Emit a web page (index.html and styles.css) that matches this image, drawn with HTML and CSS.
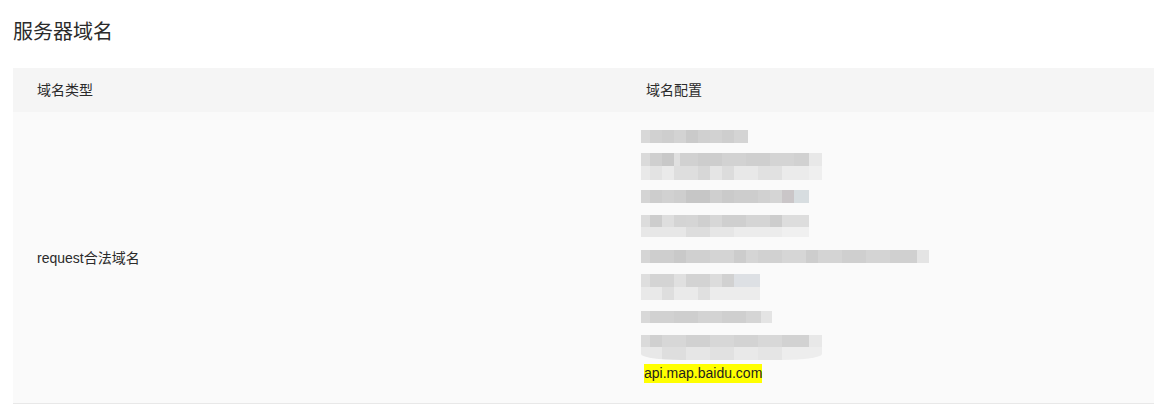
FILE: index.html
```html
<!DOCTYPE html>
<html lang="zh-CN">
<head>
<meta charset="utf-8">
<title>服务器域名</title>
<link rel="stylesheet" href="styles.css">
</head>
<body>
<h2 class="title">服务器域名</h2>
<div class="table">
  <div class="row head">
    <div class="cell">域名类型</div>
    <div class="cell">域名配置</div>
  </div>
  <div class="row body">
    <div class="cell label">request合法域名</div>
    <div class="cell list">
      <div class="mz r1"><div class="band b-r1"></div></div>
      <div class="mz r2"><div class="band b-r2a"></div><div class="band b-r2b"></div></div>
      <div class="mz r3"><div class="band b-r3"></div></div>
      <div class="mz r4"><div class="band b-r4a"></div><div class="band b-r4b"></div></div>
      <div class="mz r5"><div class="band b-r5"></div></div>
      <div class="mz r6"><div class="band b-r6a"></div><div class="band b-r6b"></div></div>
      <div class="mz r7"><div class="band b-r7"></div></div>
      <div class="mz r8"><div class="band b-r8a"></div><div class="band b-r8b"></div></div>
      <div class="domain"><span class="hl">api.map.baidu.com</span></div>
    </div>
  </div>
</div>
</body>
</html>
```
FILE: styles.css
```css
html, body {
  margin: 0;
  padding: 0;
  background: #ffffff;
}
body {
  font-family: "Liberation Sans", "Noto Sans CJK SC", sans-serif;
  color: #2b2b2b;
  font-size: 14px;
}
.title {
  margin: 0;
  padding: 18px 0 0 13px;
  height: 50px;
  line-height: 28px;
  font-size: 20px;
  font-weight: normal;
  color: #2b2b2b;
}
.table {
  margin-left: 13px;
  border-bottom: 1px solid #e8e8e8;
}
.row {
  display: grid;
  grid-template-columns: 609px 1fr;
}
.head {
  background: #f5f5f5;
  height: 44px;
}
.head .cell {
  padding-left: 24px;
  display: flex;
  align-items: center;
  line-height: 20px;
}
.body {
  background: #fafafa;
}
.label {
  padding-left: 24px;
  display: flex;
  align-items: center;
  line-height: 20px;
}
.list {
  display: flex;
  flex-direction: column;
  align-items: flex-start;
  padding: 18px 0 20px 19px;
}
.mz {
  display: flex;
  flex-direction: column;
  align-items: flex-start;
  filter: blur(0.4px) brightness(0.975);
}
.band { flex: none; }
.r2 { margin-top: 10px; }
.r3 { margin-top: 10px; }
.r4 { margin-top: 12px; }
.r5 { margin-top: 13px; }
.r6 { margin-top: 11px; }
.r7 { margin-top: 11px; }
.r8 { margin-top: 12px; }
.domain { margin-top: 4px; height: 19px; padding-left: 3px; }
.hl {
  display: inline-block;
  background: #ffff00;
  color: #1e1e1e;
  height: 19px;
  line-height: 19px;
  font-size: 14px;
}

.b-r1 {
  width: 107px; height: 13px;
  background: linear-gradient(to right,
    #dedede 0 9px, #d6d6d6 9px 21px, #d3d3d3 21px 33px, #d8d8d8 33px 45px,
    #cfcfcf 45px 57px, #d5d5d5 57px 69px, #d7d7d7 69px 81px, #d3d3d3 81px 93px, #d9d9d9 93px 107px);
}
.b-r2a {
  width: 181px; height: 13px;
  background: linear-gradient(to right,
    #e0e0e0 0 9px, #d4d4d4 9px 21px, #cdcdcd 21px 33px, #e6e6e6 33px 39px, #d6d6d6 39px 57px,
    #d2d2d2 57px 81px, #d7d7d7 81px 105px, #d4d4d4 105px 129px, #d9d9d9 129px 153px,
    #d6d6d6 153px 168px, #eeeeee 168px 181px);
}
.b-r2b {
  width: 181px; height: 14px;
  background: linear-gradient(to right,
    #efefef 0 9px, #e9e9e9 9px 21px, #f0f0f0 21px 33px, #e4e4e4 33px 57px, #dddddd 57px 69px,
    #ebebeb 69px 81px, #e2e2e2 81px 93px, #eeeeee 93px 117px, #e7e7e7 117px 141px,
    #f1f1f1 141px 168px, #f5f5f5 168px 181px);
}
.b-r3 {
  width: 168px; height: 13px;
  background: linear-gradient(to right,
    #d9d9d9 0 9px, #d2d2d2 9px 21px, #d6d6d6 21px 33px, #d3d3d3 33px 45px, #cbcbcb 45px 69px,
    #d4d4d4 69px 81px, #cfcfcf 81px 93px, #d2d2d2 93px 117px, #d6d6d6 117px 129px,
    #dadada 129px 141px, #cfcbcd 141px 153px, #dde3e6 153px 168px);
}
.b-r4a {
  width: 168px; height: 12px;
  background: linear-gradient(to right,
    #e2e2e2 0 9px, #d2d2d2 9px 21px, #e4e4e4 21px 33px, #d9d9d9 33px 45px, #dadada 45px 57px,
    #d4d4d4 57px 69px, #dddddd 69px 81px, #d4d4d4 81px 105px, #dadada 105px 129px,
    #d2d2d2 129px 141px, #e3e3e3 141px 168px);
}
.b-r4b {
  width: 168px; height: 10px;
  background: linear-gradient(to right,
    #ededed 0 45px, #e3e3e3 45px 69px, #ececec 69px 93px, #f2f2f2 93px 141px, #f6f6f6 141px 168px);
}
.b-r5 {
  width: 288px; height: 13px;
  background: linear-gradient(to right,
    #dadada 0 9px, #d3d3d3 9px 33px, #cecece 33px 45px, #d5d5d5 45px 69px, #d9d9d9 69px 93px,
    #d1d1d1 93px 105px, #dadada 105px 117px, #d6d6d6 117px 141px, #dbdbdb 141px 165px,
    #d2d2d2 165px 177px, #d9d9d9 177px 201px, #d4d4d4 201px 225px, #d9d9d9 225px 249px,
    #d5d5d5 249px 276px, #eaeaea 276px 288px);
}
.b-r6a {
  width: 119px; height: 13px;
  background: linear-gradient(to right,
    #e4e4e4 0 9px, #d9d9d9 9px 33px, #e6e6e6 33px 45px, #d8d8d8 45px 69px, #e2e2e2 69px 81px,
    #d6d6d6 81px 93px, #e3e6ea 93px 119px);
}
.b-r6b {
  width: 119px; height: 13px;
  background: linear-gradient(to right,
    #efefef 0 21px, #e4e4e4 21px 33px, #f0f0f0 33px 57px, #e6e6e6 57px 69px, #f2f2f2 69px 119px);
}
.b-r7 {
  width: 131px; height: 12px;
  background: linear-gradient(to right,
    #dedede 0 9px, #d6d6d6 9px 33px, #d3d3d3 33px 57px, #d8d8d8 57px 81px, #d4d4d4 81px 105px,
    #dadada 105px 120px, #eaeaea 120px 131px);
}
.b-r8a {
  width: 181px; height: 12px;
  background: linear-gradient(to right,
    #e0e0e0 0 9px, #d5d5d5 9px 21px, #dcdcdc 21px 45px, #d6d6d6 45px 69px, #dddddd 69px 93px,
    #d8d8d8 93px 117px, #dedede 117px 141px, #d7d7d7 141px 168px, #eeeeee 168px 181px);
}
.b-r8b {
  width: 181px; height: 13px;
  background: linear-gradient(to right,
    #eeeeee 0 21px, #e4e4e4 21px 45px, #ececec 45px 69px, #e7e7e7 69px 93px, #efefef 93px 117px,
    #ebebeb 117px 141px, #f3f3f3 141px 181px);
  border-radius: 0 0 40px 40px / 0 0 6px 6px;
}
```
